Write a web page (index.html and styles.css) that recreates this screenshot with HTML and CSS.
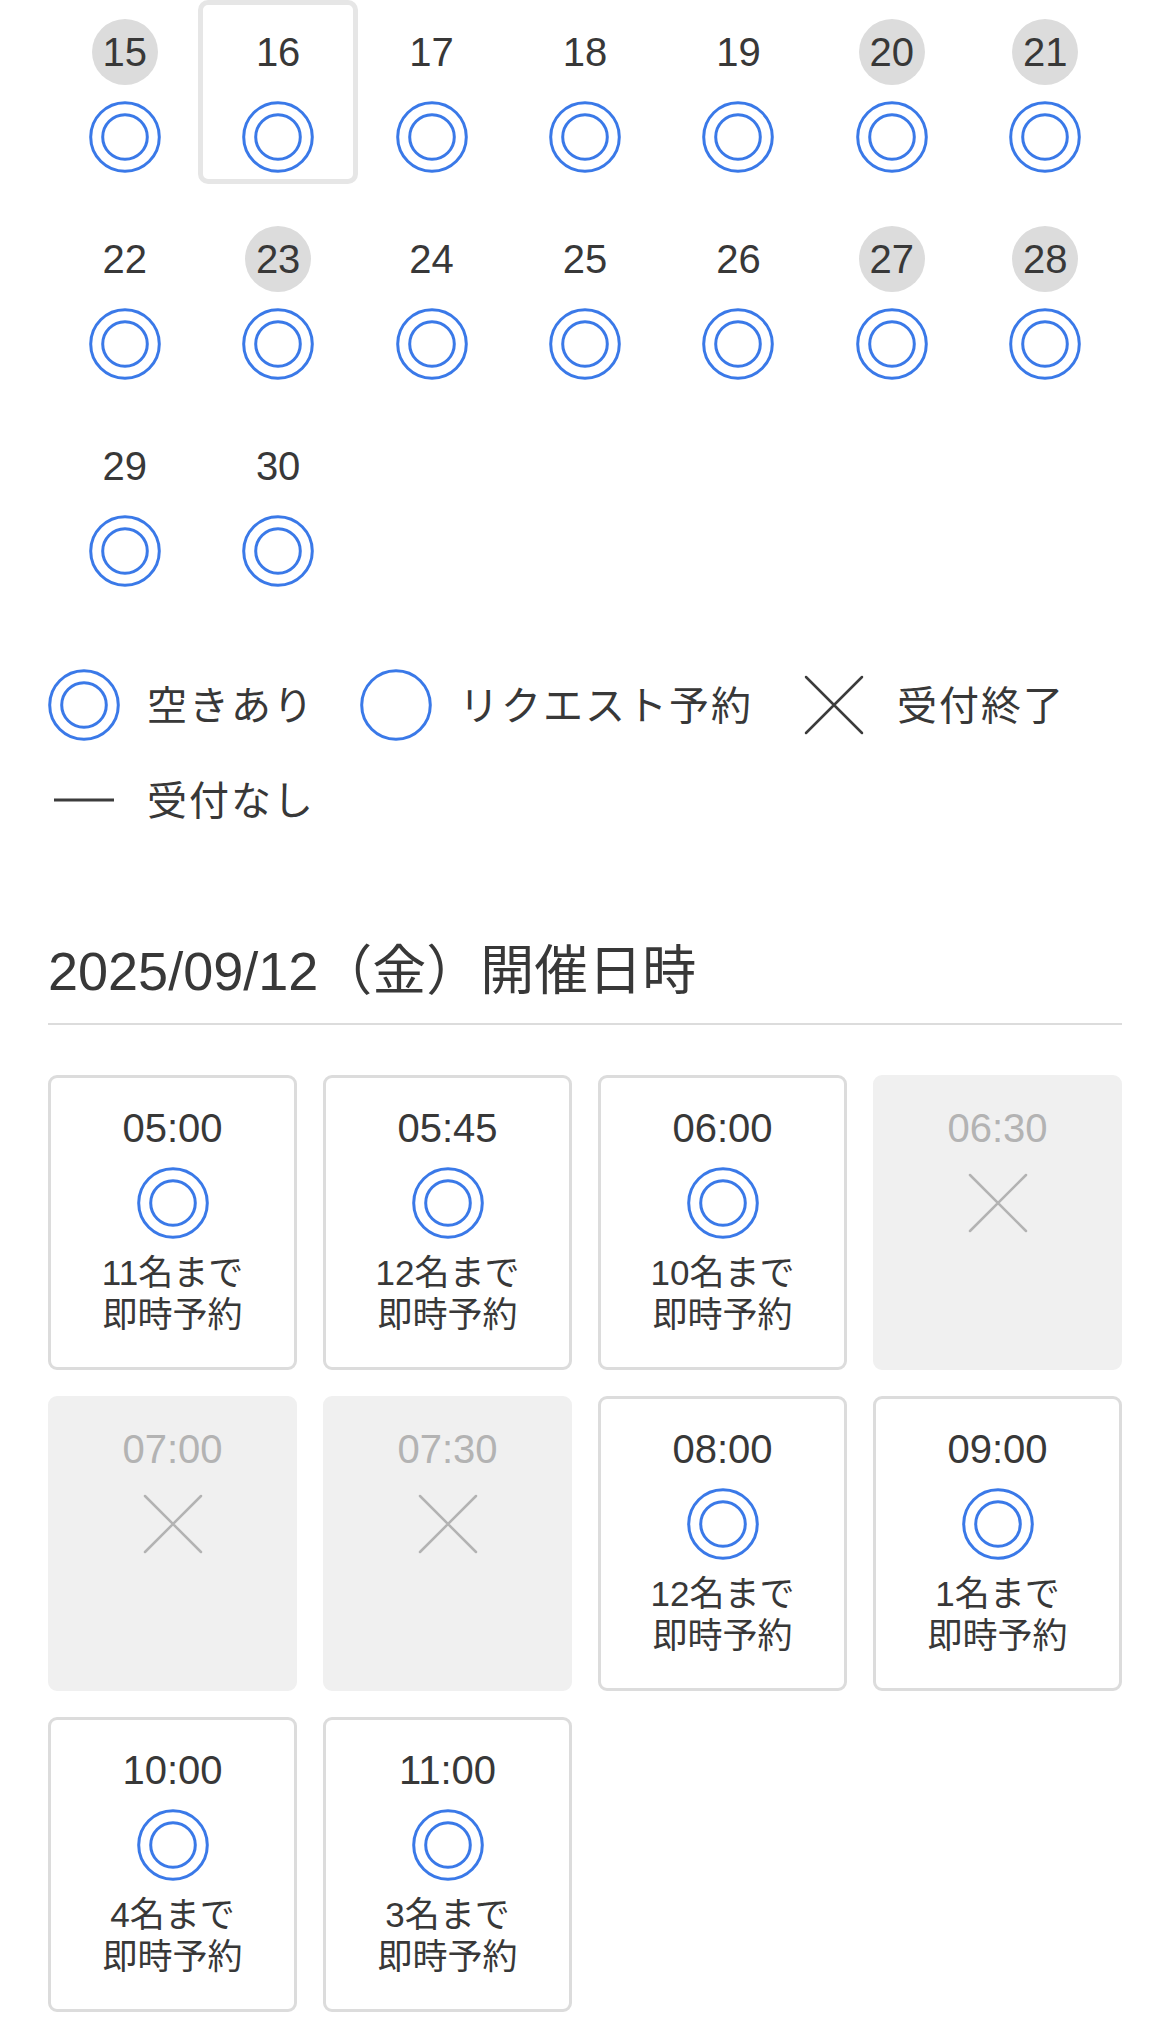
FILE: index.html
```html
<!DOCTYPE html>
<html lang="ja">
  <head>
    <meta charset="utf-8">
    <title>開催日時</title>
    <link rel="stylesheet" href="styles.css">
  </head>
  <body>
    <svg width="0" height="0" class="defs">
      <defs>
        <symbol id="ok" viewBox="0 0 72 72">
          <circle cx="36" cy="36" r="34.3" fill="none" stroke="currentColor" stroke-width="3"/>
          <circle cx="36" cy="36" r="22.3" fill="none" stroke="currentColor" stroke-width="3"/>
        </symbol>
        <symbol id="req" viewBox="0 0 72 72">
          <circle cx="36" cy="36" r="34.3" fill="none" stroke="currentColor" stroke-width="3"/>
        </symbol>
        <symbol id="closed" viewBox="0 0 72 72">
          <path d="M8 8 L64 64 M64 8 L8 64" fill="none" stroke="currentColor" stroke-width="2.5" stroke-linecap="round"/>
        </symbol>
        <symbol id="none" viewBox="0 0 72 72">
          <path d="M6 36 H66" fill="none" stroke="currentColor" stroke-width="3"/>
        </symbol>
      </defs>
    </svg>

    <div class="calendar">
      <div class="day"><span class="day-num holiday">15</span><svg class="icon blue"><use href="#ok"/></svg></div>
      <div class="day selected"><span class="day-num">16</span><svg class="icon blue"><use href="#ok"/></svg></div>
      <div class="day"><span class="day-num">17</span><svg class="icon blue"><use href="#ok"/></svg></div>
      <div class="day"><span class="day-num">18</span><svg class="icon blue"><use href="#ok"/></svg></div>
      <div class="day"><span class="day-num">19</span><svg class="icon blue"><use href="#ok"/></svg></div>
      <div class="day"><span class="day-num holiday">20</span><svg class="icon blue"><use href="#ok"/></svg></div>
      <div class="day"><span class="day-num holiday">21</span><svg class="icon blue"><use href="#ok"/></svg></div>

      <div class="day"><span class="day-num">22</span><svg class="icon blue"><use href="#ok"/></svg></div>
      <div class="day"><span class="day-num holiday">23</span><svg class="icon blue"><use href="#ok"/></svg></div>
      <div class="day"><span class="day-num">24</span><svg class="icon blue"><use href="#ok"/></svg></div>
      <div class="day"><span class="day-num">25</span><svg class="icon blue"><use href="#ok"/></svg></div>
      <div class="day"><span class="day-num">26</span><svg class="icon blue"><use href="#ok"/></svg></div>
      <div class="day"><span class="day-num holiday">27</span><svg class="icon blue"><use href="#ok"/></svg></div>
      <div class="day"><span class="day-num holiday">28</span><svg class="icon blue"><use href="#ok"/></svg></div>

      <div class="day"><span class="day-num">29</span><svg class="icon blue"><use href="#ok"/></svg></div>
      <div class="day"><span class="day-num">30</span><svg class="icon blue"><use href="#ok"/></svg></div>
    </div>

    <ul class="legend">
      <li><svg class="icon blue"><use href="#ok"/></svg><span>空きあり</span></li>
      <li><svg class="icon blue"><use href="#req"/></svg><span>リクエスト予約</span></li>
      <li><svg class="icon"><use href="#closed"/></svg><span>受付終了</span></li>
      <li><svg class="icon"><use href="#none"/></svg><span>受付なし</span></li>
    </ul>

    <h2 class="date-title">2025/09/12（金）開催日時</h2>

    <div class="slots">
      <div class="slot">
        <div class="slot-time">05:00</div>
        <svg class="icon blue"><use href="#ok"/></svg>
        <div class="slot-note">11名まで<br>即時予約</div>
      </div>
      <div class="slot">
        <div class="slot-time">05:45</div>
        <svg class="icon blue"><use href="#ok"/></svg>
        <div class="slot-note">12名まで<br>即時予約</div>
      </div>
      <div class="slot">
        <div class="slot-time">06:00</div>
        <svg class="icon blue"><use href="#ok"/></svg>
        <div class="slot-note">10名まで<br>即時予約</div>
      </div>
      <div class="slot closed">
        <div class="slot-time">06:30</div>
        <svg class="icon"><use href="#closed"/></svg>
      </div>

      <div class="slot closed">
        <div class="slot-time">07:00</div>
        <svg class="icon"><use href="#closed"/></svg>
      </div>
      <div class="slot closed">
        <div class="slot-time">07:30</div>
        <svg class="icon"><use href="#closed"/></svg>
      </div>
      <div class="slot">
        <div class="slot-time">08:00</div>
        <svg class="icon blue"><use href="#ok"/></svg>
        <div class="slot-note">12名まで<br>即時予約</div>
      </div>
      <div class="slot">
        <div class="slot-time">09:00</div>
        <svg class="icon blue"><use href="#ok"/></svg>
        <div class="slot-note">1名まで<br>即時予約</div>
      </div>

      <div class="slot">
        <div class="slot-time">10:00</div>
        <svg class="icon blue"><use href="#ok"/></svg>
        <div class="slot-note">4名まで<br>即時予約</div>
      </div>
      <div class="slot">
        <div class="slot-time">11:00</div>
        <svg class="icon blue"><use href="#ok"/></svg>
        <div class="slot-note">3名まで<br>即時予約</div>
      </div>
    </div>
  </body>
</html>
```

FILE: styles.css
```css
body {
  margin: 0;
  padding: 0 48px 30px;
  font-family: "Liberation Sans", "Noto Sans CJK JP", sans-serif;
  color: #383838;
  background-color: #fff;
}
.defs {
  position: absolute;
}
.icon {
  display: block;
  width: 72px;
  height: 72px;
  color: #3c3c3c;
}
.icon.blue {
  color: #3a79e8;
}

/* calendar */
.calendar {
  display: grid;
  grid-template-columns: repeat(7, 1fr);
  row-gap: 23px;
}
.day {
  margin: 0 -3px;
  border: 5px solid transparent;
  border-radius: 10px;
  padding: 14px 0 6px;
  display: flex;
  flex-direction: column;
  align-items: center;
  gap: 16px;
}
.day.selected {
  border-color: #e6e6e6;
}
.day-num {
  width: 66px;
  height: 66px;
  border-radius: 50%;
  display: flex;
  align-items: center;
  justify-content: center;
  font-size: 40px;
}
.day-num.holiday {
  background-color: #dcdcdc;
}

/* legend */
.legend {
  list-style: none;
  margin: 71px 0 0;
  padding: 0;
  display: flex;
  flex-wrap: wrap;
  column-gap: 45px;
  row-gap: 23px;
}
.legend li {
  display: flex;
  align-items: center;
  gap: 27px;
  font-size: 40px;
  letter-spacing: 2px;
}
.legend span {
  margin-bottom: 5px;
}

/* date heading */
.date-title {
  margin: 100px 0 0;
  padding-bottom: 17px;
  border-bottom: 2px solid #dcdcdc;
  font-size: 54px;
  font-weight: normal;
  line-height: 70px;
}

/* time slots */
.slots {
  margin-top: 50px;
  display: grid;
  grid-template-columns: repeat(4, 1fr);
  gap: 26px;
}
.slot {
  border: 3px solid #dcdcdc;
  border-radius: 9px;
  padding: 26px 0 31px;
  display: flex;
  flex-direction: column;
  align-items: center;
  text-align: center;
}
.slot-time {
  font-size: 40px;
  line-height: 48px;
}
.slot .icon {
  margin-top: 15px;
}
.slot-note {
  margin-top: 13px;
  font-size: 35px;
  line-height: 42px;
}
.slot.closed {
  background-color: #f0f0f0;
  border-color: #f0f0f0;
  color: #b3b3b3;
}
.slot.closed .icon {
  color: #b3b3b3;
}
.slot.closed .icon path {
  stroke-width: 2;
}
```
